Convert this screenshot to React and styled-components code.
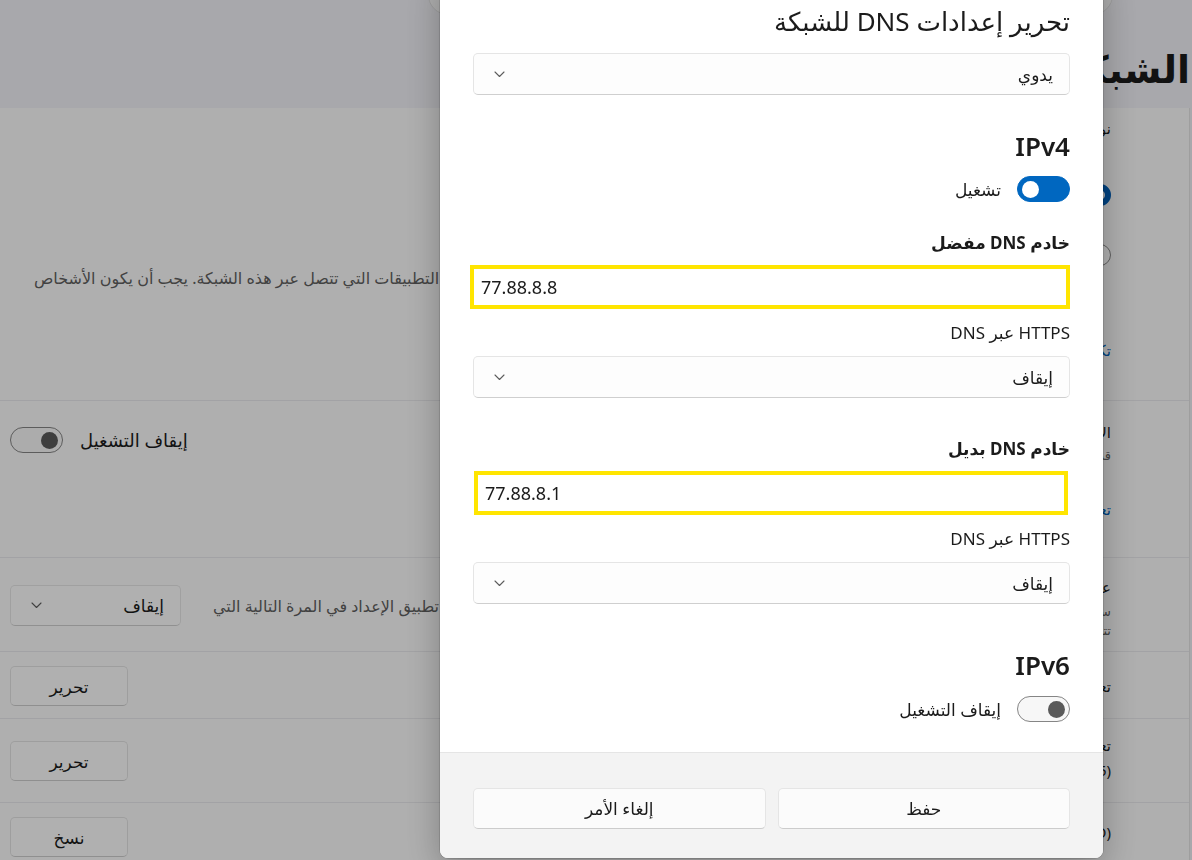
import React from 'react';
import styled, { createGlobalStyle } from 'styled-components';

const GlobalStyle = createGlobalStyle`
  html, body {
    margin: 0;
    padding: 0;
  }
  body {
    font-family: "Noto Sans", "DejaVu Sans", sans-serif;
    color: #1b1b1b;
    overflow: hidden;
  }
`;

// ---------- settings page underneath ----------

const Page = styled.div`
  position: relative;
  width: 1192px;
  height: 860px;
  overflow: hidden;
  direction: rtl;
  display: flex;
  flex-direction: column;
  background: #f1f1f6;
`;

const Header = styled.header`
  height: 108px;
  flex-shrink: 0;
  display: flex;
  flex-direction: column;
  align-items: flex-start;
`;

const SearchPill = styled.div`
  margin-top: -25px;
  margin-right: 79px;
  width: 685px;
  height: 40px;
  box-sizing: border-box;
  border-radius: 20px;
  background: #fbfbfb;
  border: 1px solid #e2e2e2;
`;

const PageTitle = styled.h1`
  margin: 29px 2px 0 0;
  font-size: 38px;
  line-height: 48px;
  font-weight: 600;
  white-space: nowrap;
  color: #1b1b1b;
`;

const Panel = styled.main`
  flex: 1;
  margin-right: 2px;
  background: #fbfbfb;
  border-right: 1px solid #e3e3e3;
  overflow: hidden;
`;

const Row = styled.section`
  height: ${(p) => p.$h}px;
  box-sizing: border-box;
  display: flex;
  justify-content: space-between;
  align-items: flex-start;
  padding: 0 78px 0 10px;
  border-bottom: 1px solid #e9e9ec;
`;

const Info = styled.div`
  display: flex;
  flex-direction: column;
  align-items: flex-start;
  padding-top: ${(p) => p.$top || 0}px;
  white-space: nowrap;
`;

const Wide = styled(Info)`
  flex: 1;
  align-items: stretch;
`;

const SettingName = styled.div`
  font-size: 15px;
  line-height: 20px;
  margin-top: ${(p) => p.$mt || 0}px;
`;

const SettingHint = styled.div`
  font-size: 13px;
  line-height: 19px;
  color: #616161;
  margin-top: ${(p) => p.$mt || 0}px;
`;

const SettingLink = styled.div`
  font-size: 15px;
  line-height: 20px;
  color: #005fb8;
  margin-top: ${(p) => p.$mt || 0}px;
`;

const RadioOption = styled.label`
  display: flex;
  align-items: center;
  gap: 14px;
  font-size: 15px;
  margin-top: ${(p) => p.$mt || 0}px;
`;

const Radio = styled.span`
  width: 22px;
  height: 22px;
  box-sizing: border-box;
  border-radius: 50%;
  background: #fff;
  border: ${(p) => (p.$checked ? '6px solid #005fb8' : '1px solid #8a8a8a')};
`;

const EndLine = styled.div`
  font-size: 16px;
  line-height: 20px;
  color: #5f5f5f;
  text-align: left;
  padding-left: 24px;
  margin-top: ${(p) => p.$mt || 0}px;
`;

const Controls = styled.div`
  display: flex;
  align-items: center;
  gap: ${(p) => p.$gap || 16}px;
  margin-top: ${(p) => p.$top || 0}px;
  white-space: nowrap;
`;

const ControlText = styled.span`
  font-size: ${(p) => (p.$muted ? 16 : 18)}px;
  color: ${(p) => (p.$muted ? '#5f5f5f' : '#1b1b1b')};
`;

const PlainButton = styled.button`
  width: 118px;
  height: 40px;
  box-sizing: border-box;
  border: 1px solid #e3e3e3;
  border-bottom-color: #cdcdcd;
  border-radius: 5px;
  background: #fdfdfd;
  font-family: inherit;
  font-size: 17px;
  color: #1b1b1b;
`;

// ---------- shared controls ----------

const Toggle = styled.span`
  width: 53px;
  height: 26px;
  box-sizing: border-box;
  border-radius: 13px;
  padding: 0 4px;
  display: flex;
  align-items: center;
  flex-shrink: 0;
  justify-content: ${(p) => (p.$on ? 'flex-end' : 'flex-start')};
  background: ${(p) => (p.$on ? '#0067c0' : '#f7f7f7')};
  border: 1px solid ${(p) => (p.$on ? '#0067c0' : '#858585')};

  &::after {
    content: '';
    width: 17px;
    height: 17px;
    border-radius: 50%;
    background: ${(p) => (p.$on ? '#ffffff' : '#5a5a5a')};
  }
`;

const Select = styled.div`
  width: ${(p) => (p.$w ? `${p.$w}px` : 'auto')};
  height: ${(p) => p.$h || 42}px;
  margin-top: ${(p) => p.$mt || 0}px;
  box-sizing: border-box;
  display: flex;
  align-items: center;
  justify-content: space-between;
  padding: 0 16px 0 20px;
  border: 1px solid #e5e5e5;
  border-bottom-color: #cfcfcf;
  border-radius: 5px;
  background: #fdfdfd;
  font-size: 17px;
  color: #1b1b1b;
`;

const Chevron = () => (
  <svg width="11" height="7" viewBox="0 0 11 7">
    <path
      d="M1 1l4.5 4.5L10 1"
      fill="none"
      stroke="#5c5c5c"
      strokeWidth="1.1"
      strokeLinecap="round"
      strokeLinejoin="round"
    />
  </svg>
);

// ---------- dialog ----------

const Smoke = styled.div`
  position: fixed;
  inset: 0;
  background: rgba(0, 0, 0, 0.3);
`;

const Dialog = styled.div`
  position: fixed;
  top: -30px;
  left: 440px;
  width: 663px;
  height: 888px;
  direction: rtl;
  display: flex;
  flex-direction: column;
  background: #fff;
  border-radius: 8px;
  overflow: hidden;
  box-shadow: 0 0 0 1px rgba(0, 0, 0, 0.12), 0 10px 36px rgba(0, 0, 0, 0.28);
`;

const DialogBody = styled.div`
  flex: 1;
  display: flex;
  flex-direction: column;
  padding: 33px 33px 0;
`;

const DialogTitle = styled.h2`
  margin: 0;
  font-size: 26px;
  line-height: 36px;
  font-weight: 400;
`;

const Heading = styled.h3`
  margin: ${(p) => p.$mt}px 0 0;
  font-size: 26px;
  line-height: 34px;
  font-weight: 600;
`;

const ToggleRow = styled.div`
  display: flex;
  align-items: center;
  gap: 16px;
  height: 26px;
  margin-top: ${(p) => p.$mt}px;
  font-size: 17px;
`;

const FieldLabel = styled.div`
  margin-top: ${(p) => p.$mt}px;
  font-size: 17px;
  line-height: 24px;
  font-weight: ${(p) => (p.$strong ? 700 : 400)};
`;

const IpBox = styled.div`
  margin: ${(p) => p.$mt}px ${(p) => p.$mr || 0}px 0 ${(p) => p.$ml || 0}px;
  height: 44px;
  box-sizing: border-box;
  display: flex;
  align-items: center;
  padding: 0 7px;
  direction: ltr;
  border: 4px solid #ffe500;
  background: #fff;
  font-size: 18px;
  color: #1b1b1b;
`;

const Footer = styled.footer`
  height: 106px;
  box-sizing: border-box;
  display: grid;
  grid-template-columns: 1fr 1fr;
  gap: 12px;
  align-items: start;
  padding: 35px 33px 0;
  background: #f3f3f3;
  border-top: 1px solid #e5e5e5;
`;

const FooterButton = styled.button`
  height: 41px;
  box-sizing: border-box;
  border: 1px solid #e5e5e5;
  border-bottom-color: #cccccc;
  border-radius: 5px;
  background: #fbfbfb;
  font-family: inherit;
  font-size: 17px;
  color: #1b1b1b;
`;

export default function App() {
  return (
    <>
      <GlobalStyle />
      <Page>
        <Header>
          <SearchPill />
          <PageTitle>الشبكة</PageTitle>
        </Header>

        <Panel>
          <Row $h={293}>
            <Wide $top={10}>
              <SettingName>نوع الشبكة</SettingName>
              <RadioOption $mt={46}>
                <Radio $checked />
                عام
              </RadioOption>
              <RadioOption $mt={38}>
                <Radio />
                خاص
              </RadioOption>
              <EndLine $mt={2}>
                مع التطبيقات التي تتصل عبر هذه الشبكة. يجب أن يكون الأشخاص
              </EndLine>
              <SettingLink $mt={52}>تكوين</SettingLink>
            </Wide>
          </Row>

          <Row $h={157}>
            <Info $top={21}>
              <SettingName>الاتصال المحدود</SettingName>
              <SettingHint $mt={4}>قد تعمل بعض التطبيقات</SettingHint>
              <SettingLink $mt={34}>تعيين حد بيانات</SettingLink>
            </Info>
            <Controls $top={26} $gap={17}>
              <ControlText>إيقاف التشغيل</ControlText>
              <Toggle />
            </Controls>
          </Row>

          <Row $h={94}>
            <Info $top={19}>
              <SettingName>عناوين عشوائية</SettingName>
              <SettingHint $mt={5}>ساعد في حماية</SettingHint>
              <SettingHint>تتغير</SettingHint>
            </Info>
            <Controls $top={27} $gap={32}>
              <ControlText $muted>تطبيق الإعداد في المرة التالية التي</ControlText>
              <Select $w={171} $h={41}>
                <span>إيقاف</span>
                <Chevron />
              </Select>
            </Controls>
          </Row>

          <Row $h={67}>
            <Info $top={24}>
              <SettingName>تعيين IP:</SettingName>
            </Info>
            <Controls $top={14}>
              <PlainButton>تحرير</PlainButton>
            </Controls>
          </Row>

          <Row $h={84}>
            <Info $top={16}>
              <SettingName>تعيين DNS:</SettingName>
              <SettingName $mt={5}>(5)</SettingName>
            </Info>
            <Controls $top={22}>
              <PlainButton>تحرير</PlainButton>
            </Controls>
          </Row>

          <Row $h={80}>
            <Info $top={19}>
              <SettingName>(SSID):</SettingName>
            </Info>
            <Controls $top={14}>
              <PlainButton>نسخ</PlainButton>
            </Controls>
          </Row>
        </Panel>

        <Smoke />

        <Dialog role="dialog">
          <DialogBody>
            <DialogTitle>تحرير إعدادات DNS للشبكة</DialogTitle>
            <Select $mt={14}>
              <span>يدوي</span>
              <Chevron />
            </Select>

            <Heading $mt={34}>IPv4</Heading>
            <ToggleRow $mt={13}>
              <Toggle $on />
              <span>تشغيل</span>
            </ToggleRow>

            <FieldLabel $mt={29} $strong>خادم DNS مفضل</FieldLabel>
            <IpBox $mt={10} $ml={-3}>77.88.8.8</IpBox>
            <FieldLabel $mt={12}>HTTPS عبر DNS</FieldLabel>
            <Select $mt={11}>
              <span>إيقاف</span>
              <Chevron />
            </Select>

            <FieldLabel $mt={39} $strong>خادم DNS بديل</FieldLabel>
            <IpBox $mt={10} $ml={1} $mr={2}>77.88.8.1</IpBox>
            <FieldLabel $mt={12}>HTTPS عبر DNS</FieldLabel>
            <Select $mt={11}>
              <span>إيقاف</span>
              <Chevron />
            </Select>

            <Heading $mt={44}>IPv6</Heading>
            <ToggleRow $mt={14}>
              <Toggle />
              <span>إيقاف التشغيل</span>
            </ToggleRow>
          </DialogBody>

          <Footer>
            <FooterButton>حفظ</FooterButton>
            <FooterButton>إلغاء الأمر</FooterButton>
          </Footer>
        </Dialog>
      </Page>
    </>
  );
}
